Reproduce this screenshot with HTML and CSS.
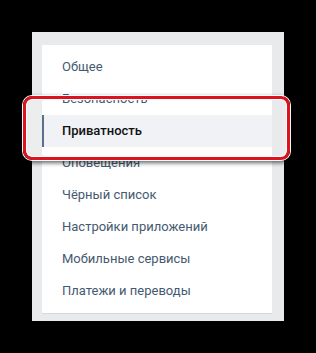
FILE: index.html
```html
<!DOCTYPE html>
<html lang="ru">
<head>
    <meta charset="UTF-8">
    <title>Настройки</title>
    <link rel="stylesheet" href="styles.css">
</head>
<body>
    <div class="settings-panel">
        <div class="menu-card">
            <div class="menu-item">Общее</div>
            <div class="menu-item">Безопасность</div>
            <div class="menu-item active">Приватность</div>
            <div class="menu-item">Оповещения</div>
            <div class="menu-item">Чёрный список</div>
            <div class="menu-item">Настройки приложений</div>
            <div class="menu-item">Мобильные сервисы</div>
            <div class="menu-item">Платежи и переводы</div>
        </div>
    </div>
    <div class="highlight-frame"></div>
</body>
</html>
```

FILE: styles.css
```css
body {
    background-color: #000000;
    margin: 0;
    padding: 32px 0 0 32px;
    font-family: Roboto, "Open Sans", Arial, sans-serif;
    font-size: 13px;
    overflow: hidden;
}

.settings-panel {
    width: 252px;
    height: 289px;
    box-sizing: border-box;
    background: #e9eaec;
    padding: 13px 12px 8px 10px;
}

.menu-card {
    background: #ffffff;
    padding: 6px 0;
    box-shadow: 0 1px 0 #d7d8db;
}

.menu-item {
    height: 32px;
    line-height: 32px;
    padding-left: 20px;
    color: #455a70;
    white-space: nowrap;
}

.menu-item.active {
    background: #f0f2f5;
    border-left: 2px solid #5d6f8a;
    padding-left: 18px;
    color: #111;
    font-weight: 500;
}

.highlight-frame {
    position: absolute;
    left: 23px;
    top: 96px;
    width: 267px;
    height: 64px;
    box-sizing: border-box;
    border: 3px solid #dc1420;
    border-radius: 9px;
    box-shadow: 0 0 0 1px #ffffff, 0 2px 4px 1px rgba(0, 0, 0, 0.6),
        inset 0 0 0 1px #ffffff, inset 15px 0 0 #eceded, inset -5px 0 0 #eceded;
}
```
